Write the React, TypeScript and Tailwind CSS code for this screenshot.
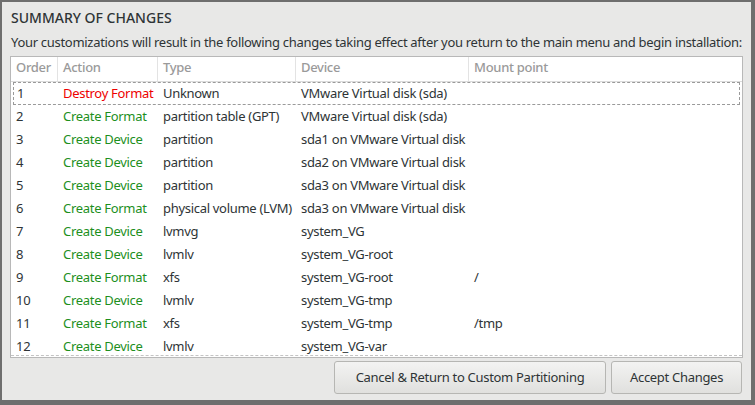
import * as React from "react";

const rows = [
  { order: "1", action: "Destroy Format", type: "Unknown", device: "VMware Virtual disk (sda)", mount: "" },
  { order: "2", action: "Create Format", type: "partition table (GPT)", device: "VMware Virtual disk (sda)", mount: "" },
  { order: "3", action: "Create Device", type: "partition", device: "sda1 on VMware Virtual disk", mount: "" },
  { order: "4", action: "Create Device", type: "partition", device: "sda2 on VMware Virtual disk", mount: "" },
  { order: "5", action: "Create Device", type: "partition", device: "sda3 on VMware Virtual disk", mount: "" },
  { order: "6", action: "Create Format", type: "physical volume (LVM)", device: "sda3 on VMware Virtual disk", mount: "" },
  { order: "7", action: "Create Device", type: "lvmvg", device: "system_VG", mount: "" },
  { order: "8", action: "Create Device", type: "lvmlv", device: "system_VG-root", mount: "" },
  { order: "9", action: "Create Format", type: "xfs", device: "system_VG-root", mount: "/" },
  { order: "10", action: "Create Device", type: "lvmlv", device: "system_VG-tmp", mount: "" },
  { order: "11", action: "Create Format", type: "xfs", device: "system_VG-tmp", mount: "/tmp" },
  { order: "12", action: "Create Device", type: "lvmlv", device: "system_VG-var", mount: "" },
];

const headers = ["Order", "Action", "Type", "Device", "Mount point"];
const widths = ["w-[47px]", "w-[100px]", "w-[138px]", "w-[173px]", "flex-1"];

const App = () => {
  return (
    <div className="w-[755px] h-[405px] bg-[#6e6e6e] pt-[2px] pl-[2px] font-['Noto_Sans',sans-serif] text-[13px] tracking-[-0.3px] text-[#2e3436]">
      <div className="w-[749px] h-[398px] bg-[#e8e8e7] flex flex-col px-2">
        <h1 className="mt-[7px] ml-[1px] text-[14px] font-medium leading-[18px] tracking-normal text-[#2e3436]">
          SUMMARY OF CHANGES
        </h1>
        <p className="mt-[6px] ml-[1px] leading-[18px] whitespace-nowrap">
          Your customizations will result in the following changes taking effect after you return to the main menu and begin installation:
        </p>
        <div className="mt-[5px] w-[733px] h-[302px] bg-white border border-[#b8b8b8] flex flex-col overflow-hidden">
          <div className="flex h-[25px] border-b border-[#dcdcdc] text-[#9a9a9a] font-medium shrink-0">
            {headers.map((h, i) => (
              <div
                key={h}
                className={`${widths[i]} px-[5px] flex items-center pb-[2px] ${i < 4 ? "border-r border-[#e3e3e3]" : ""}`}
              >
                {h}
              </div>
            ))}
          </div>
          <div className="flex flex-col">
            {rows.map((r, idx) => (
              <div
                key={r.order}
                className={`flex h-[23px] items-center shrink-0 ${idx === 0 ? "mx-[2px] border border-dashed border-[#9a9a9a]" : ""}`}
              >
                <div className={`${idx === 0 ? "w-[44px] pl-[3px]" : "w-[47px] pl-[5px]"}`}>{r.order}</div>
                <div
                  className={`w-[100px] px-[5px] whitespace-nowrap ${r.action.startsWith("Destroy") ? "text-[#ee0000]" : "text-[#1d8f1d]"}`}
                >
                  {r.action}
                </div>
                <div className="w-[138px] px-[5px] whitespace-nowrap">{r.type}</div>
                <div className="w-[173px] px-[5px] whitespace-nowrap">{r.device}</div>
                <div className="flex-1 px-[5px]">{r.mount}</div>
              </div>
            ))}
          </div>
          <div className="flex-1" />
          <div className="border-t border-dashed border-[#c4c4c4] h-0 -mt-[3px] mb-[2px]" />
        </div>
        <div className="mt-[3px] flex justify-end gap-[5px] mr-[1px]">
          <button className="w-[272px] h-[33px] rounded-[3px] border border-[#b6b6b3] bg-gradient-to-b from-[#f3f3f2] to-[#e0e0de] text-[#2e3436]">
            Cancel &amp; Return to Custom Partitioning
          </button>
          <button className="w-[131px] h-[33px] rounded-[3px] border border-[#b6b6b3] bg-gradient-to-b from-[#f3f3f2] to-[#e0e0de] text-[#2e3436]">
            Accept Changes
          </button>
        </div>
      </div>
    </div>
  );
};

export default App;
